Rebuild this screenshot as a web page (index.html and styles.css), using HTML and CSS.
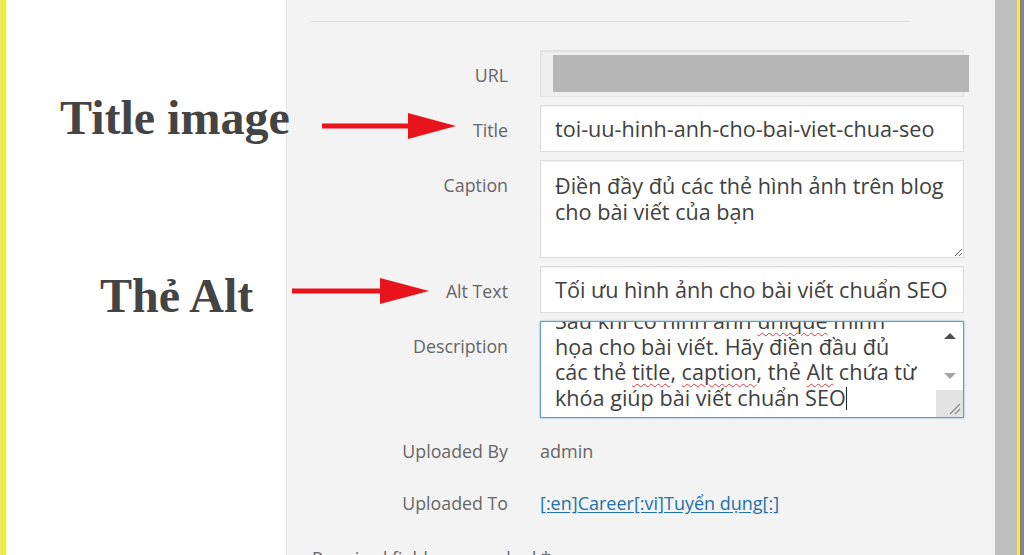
FILE: index.html
```html
<!DOCTYPE html>
<html lang="vi">
<head>
<meta charset="utf-8">
<title>Attachment details</title>
<link rel="stylesheet" href="styles.css">
</head>
<body>
<div class="page">
  <div class="stripe-left"></div>
  <div class="blank"></div>
  <div class="panel">
    <div class="sep"></div>
    <div class="form">
      <label class="lbl">URL</label>
      <div class="url-wrap"><input class="fld url" readonly value=""><div class="redact"></div></div>

      <label class="lbl">Title</label>
      <input class="fld" value="toi-uu-hinh-anh-cho-bai-viet-chua-seo">

      <label class="lbl">Caption</label>
      <textarea class="fld area">Điền đầy đủ các thẻ hình ảnh trên blog
cho bài viết của bạn</textarea>

      <label class="lbl">Alt Text</label>
      <input class="fld" value="Tối ưu hình ảnh cho bài viết chuẩn SEO">

      <label class="lbl">Description</label>
      <div class="desc">
        <div class="desc-text">
          <div class="desc-lines">Sau khi có hình ảnh <span class="sp">unique</span> minh<br>họa cho bài viết. Hãy điền đầu đủ<br>các thẻ <span class="sp">title</span>, <span class="sp">caption</span>, thẻ <span class="sp">Alt</span> chứa từ<br>khóa giúp bài viết chuẩn SEO<span class="caret"></span></div>
        </div>
        <div class="sbar">
          <div class="sbtn"><span class="tri-up"></span></div>
          <div class="strack"></div>
          <div class="sbtn"><span class="tri-down"></span></div>
          <div class="scorner">
            <svg class="grip" width="14" height="14" viewBox="0 0 14 14"><path d="M13 3 L3 13 M13 8 L8 13" stroke="#8a8a8a" stroke-width="1.2" fill="none"/></svg>
          </div>
        </div>
      </div>

      <div class="lbl meta">Uploaded By</div>
      <div class="val meta">admin</div>

      <div class="lbl meta">Uploaded To</div>
      <div class="val meta"><a class="link" href="#">[:en]Career[:vi]Tuyển dụng[:]</a></div>
    </div>
    <div class="req">Required fields are marked *</div>
  </div>
  <div class="scroll-strip"></div>
  <div class="stripe-right"></div>
  <div class="edge"></div>

  <div class="note note-title">Title image</div>
  <div class="note note-alt">Thẻ Alt</div>
  <svg class="arrow arrow-title" width="134" height="28" viewBox="0 0 134 28"><rect x="0" y="11.5" width="90" height="5" fill="#e8141c"/><polygon points="86,1 134,14 86,27" fill="#e8141c"/></svg>
  <svg class="arrow arrow-alt" width="137" height="28" viewBox="0 0 137 28"><rect x="0" y="11.5" width="92" height="5" fill="#e8141c"/><polygon points="88,1 137,14 88,27" fill="#e8141c"/></svg>
</div>
</body>
</html>
```
FILE: styles.css
```css
* { box-sizing: border-box; }
html, body { margin: 0; padding: 0; }
body { width: 1024px; height: 555px; overflow: hidden; background: #fff; font-family: "Open Sans", "Noto Sans", sans-serif; }

.page { position: relative; display: flex; width: 1024px; height: 555px; overflow: hidden; }

.stripe-left { width: 6px; background: #f4f40c; border-left: 1px solid #e8e8a0; flex: none; }
.blank { width: 280px; background: #fff; flex: none; }
.panel { width: 709px; flex: none; background: #f3f3f3; border-left: 1px solid #e2e2e2; padding: 21px 31px 0 0; display: flex; flex-direction: column; }
.scroll-strip { width: 22px; flex: none; background: #bebebe; }
.stripe-right { width: 3px; flex: none; background: #f4f40c; }
.edge { flex: 1; background: #858585; }

.sep { margin-left: 24px; width: 599px; height: 1px; background: #dcdcdc; flex: none; }

.form { display: grid; grid-template-columns: 221px 424px; column-gap: 32px; row-gap: 8px; margin-top: 28px; }

.lbl { text-align: right; font-size: 17.8px; line-height: 26px; padding-top: 12px; color: #666; }
.val { font-size: 18px; line-height: 26px; padding-top: 12px; color: #666; }
.meta { padding-bottom: 6px; }

.fld { display: block; width: 424px; height: 47px; margin: 0; border: 1px solid #dcdcdc; background: #fff; box-shadow: inset 0 1px 2px rgba(0,0,0,.07); font-family: "Open Sans", "Noto Sans", sans-serif; font-size: 21.6px; color: #404040; padding: 0 6px 0 14px; outline: none; }
.url-wrap { position: relative; }
.fld.url { background: #efefef; border-color: #e2e2e2; }
.redact { position: absolute; left: 13px; right: -5px; top: 5px; bottom: 5px; background: #b6b6b6; }

.area { height: 98px; resize: vertical; line-height: 26px; padding: 12px 6px 0 14px; overflow: hidden; }

.desc { display: flex; height: 97px; border: 1px solid #5b9dd9; box-shadow: 0 0 2px rgba(30,140,190,.6); background: #fff; overflow: hidden; }
.desc-text { flex: 1; overflow: hidden; padding-left: 14px; }
.desc-lines { margin-top: -14px; font-size: 21.6px; line-height: 25.5px; color: #404040; white-space: nowrap; }
.sp { text-decoration: underline wavy #e0393e; text-decoration-thickness: 1px; text-underline-offset: 3px; }
.caret { display: inline-block; width: 1px; height: 23px; background: #222; vertical-align: -4px; }

.sbar { width: 27px; flex: none; display: flex; flex-direction: column; background: #fff; }
.sbtn { height: 28px; display: flex; align-items: center; justify-content: center; }
.strack { flex: 1; }
.scorner { height: 27px; background: #e3e3e3; display: flex; align-items: flex-end; justify-content: flex-end; padding: 0 2px 2px 0; }
.grip { display: block; }
.tri-up { width: 0; height: 0; border-left: 6px solid transparent; border-right: 6px solid transparent; border-bottom: 6px solid #505050; }
.tri-down { width: 0; height: 0; border-left: 6px solid transparent; border-right: 6px solid transparent; border-top: 6px solid #a4a4a4; }

.link { color: #2271a8; text-decoration: underline; text-underline-offset: 2px; }

.req { margin: 23px 0 0 25px; font-size: 17.8px; line-height: 26px; color: #666; }

.note { position: absolute; font-family: "Liberation Serif", "Times New Roman", serif; font-weight: bold; font-size: 48px; line-height: 1; color: #444; white-space: nowrap; }
.note-title { left: 60px; top: 94px; }
.note-alt { left: 100px; top: 272px; }

.arrow { position: absolute; display: block; }
.arrow-title { left: 322px; top: 112px; }
.arrow-alt { left: 292px; top: 277px; }
```
